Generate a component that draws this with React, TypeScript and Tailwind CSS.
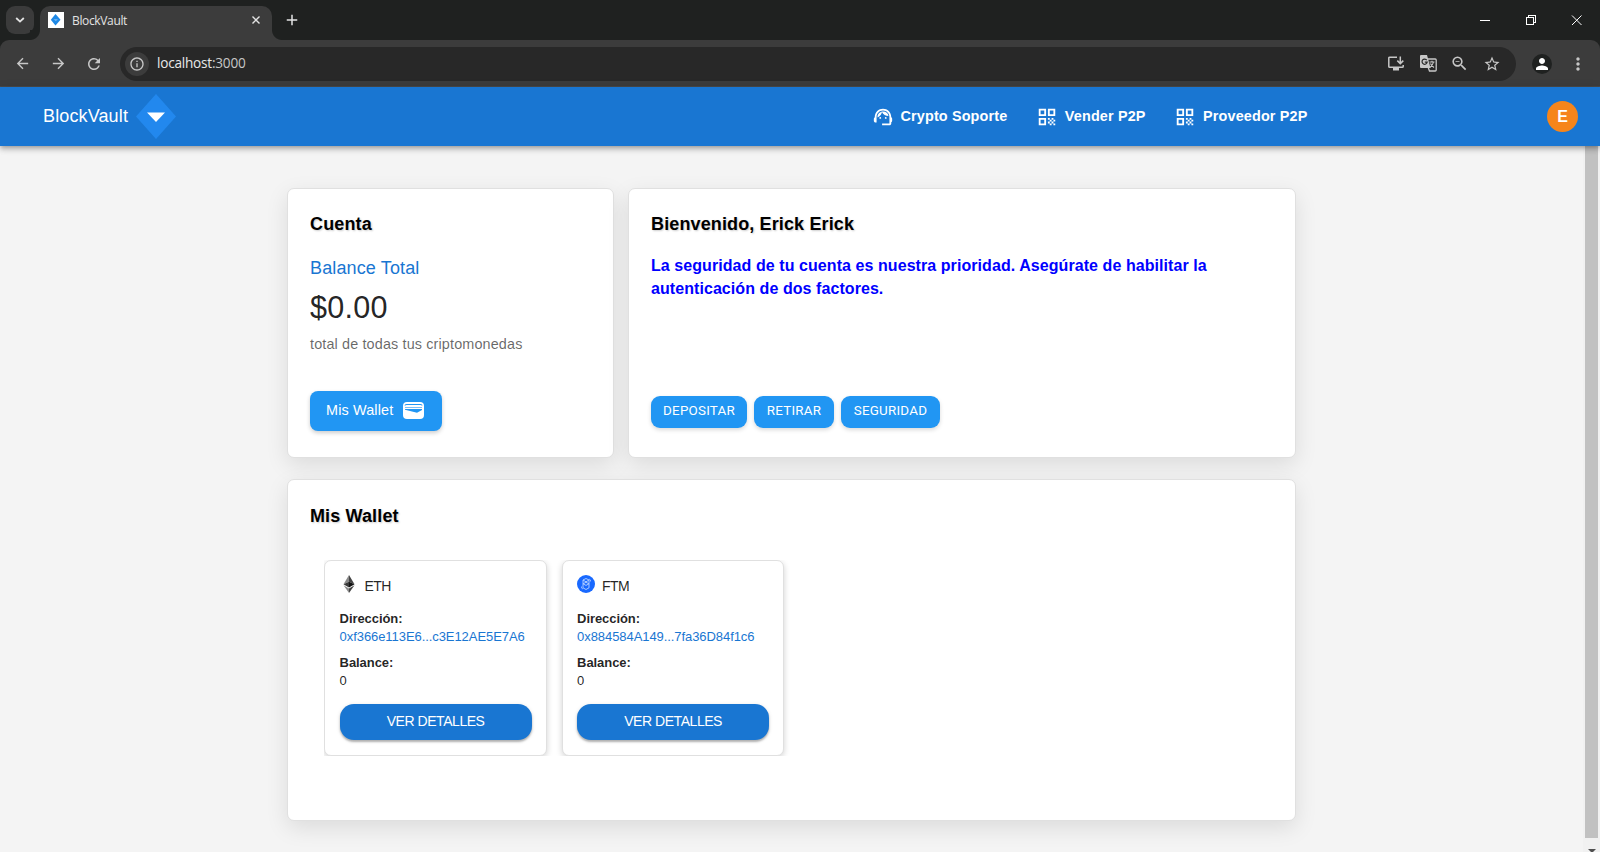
import type { ReactNode } from "react";
import {
  MdArrowBack,
  MdArrowForward,
  MdInfoOutline,
  MdMoreVert,
  MdPerson,
  MdQrCode,
  MdRefresh,
  MdStarBorder,
  MdSupportAgent,
  MdZoomOut,
  MdAdd,
} from "react-icons/md";

function TabStrip() {
  return (
    <div className="flex h-10 shrink-0 bg-[#1f2120] pl-[6px] text-[#e3e3e3]">
      <div className="mt-[6px] flex size-7 items-center justify-center rounded-[9px] bg-[#3b3b3b]">
        <svg className="h-[6px] w-[10px]" viewBox="0 0 10 6" fill="none" stroke="currentColor" strokeWidth="1.8">
          <path d="M1.2 1L5 4.6L8.8 1" />
        </svg>
      </div>
      <div className="relative ml-[6px] mt-[6px] flex h-[34px] w-[232px] items-center rounded-t-[10px] bg-[#3c3c3c] pl-2 pr-[12px]">
        <span className="absolute -left-[10px] bottom-0 size-[10px] bg-[radial-gradient(circle_at_0_0,#1f2120_9.5px,#3c3c3c_10.5px)]" />
        <span className="absolute -right-[10px] bottom-0 size-[10px] bg-[radial-gradient(circle_at_100%_0,#1f2120_9.5px,#3c3c3c_10.5px)]" />
        <svg className="-mt-[6px] size-4 bg-white" viewBox="0 0 16 16">
          <path d="M7.5 2L12.5 7.8L7.5 13.5L2.8 7.8Z" fill="#1e88e5" />
          <path d="M5.5 7.3H10L7.8 9Z" fill="#7fbcf3" />
        </svg>
        <span className="-mt-[5px] ml-2 font-['Open_Sans','Noto_Sans',sans-serif] text-[12px] tracking-[-0.35px]">BlockVault</span>
        <svg className="-mt-[6px] ml-auto size-2" viewBox="0 0 8 8" fill="none" stroke="currentColor" strokeWidth="1.4">
          <path d="M.5 .5L7.5 7.5M7.5 .5L.5 7.5" />
        </svg>
      </div>
      <MdAdd size={18} className="ml-[11px] mt-[11px]" />
      <div className="ml-auto flex items-center pr-[18px] text-white">
        <svg className="h-[12px] w-[102px]" viewBox="0 0 102 12" fill="none" stroke="currentColor" shapeRendering="crispEdges">
          <path d="M0 6.5H10" />
          <path d="M46.5 3.5H53.5V10.5H46.5ZM48.5 3.5V1.5H55.5V8.5H53.5" />
          <path d="M92 1.5L101.5 11M101.5 1.5L92 11" shapeRendering="auto" />
        </svg>
      </div>
    </div>
  );
}

function InstallIcon() {
  return (
    <svg className="h-[15px] w-4" viewBox="0 0 16 15" fill="none" stroke="currentColor" strokeWidth="1.5">
      <path d="M9 1.2H1.8Q.8 1.2 .8 2V10.4Q.8 11.2 1.8 11.2H14.2Q15.2 11.2 15.2 10.4V9" />
      <path d="M12.3 0.5V7M9.3 4.6L12.3 7.6L15.3 4.6" />
      <path d="M5 13H11" strokeWidth="3" />
    </svg>
  );
}

function TranslateIcon() {
  return (
    <svg className="h-[17px] w-[17px]" viewBox="0 0 17 17" fill="none">
      <path d="M7 4H15.2Q16.2 4 16.2 5V15Q16.2 16 15.2 16H9.5L8 12" stroke="#c7c7c7" strokeWidth="1.3" />
      <path d="M1 0H7L10.5 13H1Q0 13 0 12V1Q0 0 1 0Z" fill="#c7c7c7" />
      <path d="M6.8 5.2A2.6 2.6 0 1 0 7.2 7.2H4.8" stroke="#282828" strokeWidth="1.2" />
      <path d="M9.5 7H14.5M12 5.8V7M13.5 7Q12.8 10.5 9.8 12.5M10.5 8.5Q11.5 11 14 12.5" stroke="#c7c7c7" strokeWidth="1.1" />
    </svg>
  );
}

function Toolbar() {
  return (
    <div className="shrink-0 bg-[#1f2120]">
      <div className="flex h-[47px] items-center rounded-t-[9px] border-b border-[#4a4a4a] bg-[#3c3c3c] px-[14px] pt-px text-[#c7c7c7]">
        <MdArrowBack size={17} />
        <MdArrowForward size={17} className="ml-[19px]" />
        <MdRefresh size={18} className="ml-[18px]" />
        <div className="ml-[17px] flex h-[34px] w-[1396px] items-center rounded-full bg-[#282828] pl-[5px] pr-[15px]">
          <span className="flex size-6 items-center justify-center rounded-full bg-[#3c3c3c]">
            <MdInfoOutline size={16} />
          </span>
          <span className="ml-2 font-['Open_Sans','Noto_Sans',sans-serif] text-[13.6px] tracking-[-0.22px] text-[#e8e8e8]">
            localhost<span className="text-[#c7c7c7]">:3000</span>
          </span>
          <div className="ml-auto flex items-center">
            <InstallIcon />
            <span className="ml-4 mr-[13px]">
              <TranslateIcon />
            </span>
            <MdZoomOut size={19} />
            <MdStarBorder size={18} className="ml-[14px]" />
          </div>
        </div>
        <span className="ml-4 flex size-5 items-center justify-center rounded-full bg-[#1f2120] text-white">
          <MdPerson size={18} />
        </span>
        <MdMoreVert size={20} className="-mr-[2px] ml-auto" />
      </div>
    </div>
  );
}

function NavItem({ icon, label }: { icon: ReactNode; label: string }) {
  return (
    <a className="flex items-center gap-[7px]">
      {icon}
      <span className="text-[14.4px] font-bold tracking-[0.15px]">{label}</span>
    </a>
  );
}

function Header() {
  return (
    <header className="relative z-10 flex h-[59px] shrink-0 items-center bg-[#1976d2] pl-[43px] pr-[22px] text-white shadow-[0_2px_4px_-1px_rgba(0,0,0,0.2),0_4px_5px_rgba(0,0,0,0.14),0_1px_9px_rgba(0,0,0,0.12)]">
      <span className="text-[18px] tracking-[0.13px]">BlockVault</span>
      <svg className="ml-[7.5px] h-[45px] w-10" viewBox="0 0 40 45">
        <path d="M20 0L40 22.5L20 45L0 22.5Z" fill="#2288ee" />
        <path d="M11 18.5H29L20 28Z" fill="#fff" />
      </svg>
      <nav className="ml-[696px] flex items-center gap-[28.5px]">
        <NavItem icon={<MdSupportAgent size={22} />} label="Crypto Soporte" />
        <NavItem icon={<MdQrCode size={22} />} label="Vender P2P" />
        <NavItem icon={<MdQrCode size={22} />} label="Proveedor P2P" />
      </nav>
      <span className="ml-auto flex size-[31px] items-center justify-center rounded-full bg-[#f6851b] pt-px text-[16px] font-bold">E</span>
    </header>
  );
}

function Card({ className, title, children }: { className: string; title: string; children: ReactNode }) {
  return (
    <section className={`rounded-[7px] border border-[#e0e0e0] bg-white px-[22px] shadow-[0_7px_22px_rgba(0,0,0,0.1)] ${className}`}>
      <h2 className="text-[18px] font-bold leading-7 tracking-[0.13px] text-black [text-shadow:1px_1px_2px_rgba(0,0,0,0.2)]">{title}</h2>
      {children}
    </section>
  );
}

function ActionButton({ className, label }: { className: string; label: string }) {
  return (
    <button className={`h-8 rounded-[9px] bg-[#2196f3] pb-[2px] font-[Roboto,sans-serif] text-[13.4px] font-[450] tracking-[0.22px] text-white shadow-[0_2px_4px_rgba(0,0,0,0.15)] ${className}`}>
      {label}
    </button>
  );
}

function EthIcon() {
  return (
    <svg className="size-[18px]" viewBox="0 0 18 18">
      <path d="M9 0L3.5 9.2L9 6.7Z" fill="#8a8a8a" />
      <path d="M9 0L14.5 9.2L9 6.7Z" fill="#444" />
      <path d="M9 6.7L3.5 9.2L9 12.4Z" fill="#393939" />
      <path d="M9 6.7L14.5 9.2L9 12.4Z" fill="#141414" />
      <path d="M9 13.5L3.5 10.3L9 18Z" fill="#8a8a8a" />
      <path d="M9 13.5L14.5 10.3L9 18Z" fill="#444" />
    </svg>
  );
}

function FtmIcon() {
  return (
    <svg className="size-[18px]" viewBox="0 0 18 18" fill="none">
      <circle cx="9" cy="9" r="9" fill="#1969ff" />
      <path d="M6 5V12.8L9 14.5L12 12.8V5M6 5L9 3.5L12 5L9 6.8ZM6 8.8L9 7.3L12 8.8L9 10.4Z" stroke="#b9d2ff" strokeWidth="0.9" />
      <path d="M4.5 11.5V13L6 14M13.5 6.5V5L12 4" stroke="#a9c7ff" strokeWidth="0.8" />
    </svg>
  );
}

function WalletCard({ icon, symbol, address }: { icon: ReactNode; symbol: string; address: string }) {
  return (
    <article className="h-[196px] w-[222.5px] shrink-0 rounded-[7px] border border-[#e0e0e0] bg-white pl-[14.6px] pt-[14px] text-[13px] leading-[18px] tracking-[-0.07px] text-black/87 shadow-[0_2px_6px_rgba(0,0,0,0.18)]">
      <div className="flex h-[18px] gap-[7px]">
        {icon}
        <span className="pt-[2px] text-[14px] tracking-[-0.6px]">{symbol}</span>
      </div>
      <p className="mt-[17px] font-bold">Dirección:</p>
      <p className="text-[#1976d2]">{address}</p>
      <p className="mt-2 font-bold">Balance:</p>
      <p>0</p>
      <button className="mt-[14px] h-9 w-[192px] rounded-[14px] bg-[#1976d2] pb-[2px] text-[14px] tracking-[-0.45px] text-white shadow-[0_2px_2px_rgba(0,0,0,0.25),0_1px_4px_rgba(0,0,0,0.12)]">
        VER DETALLES
      </button>
    </article>
  );
}

function Scrollbar() {
  return (
    <div className="flex h-full w-[17px] flex-col items-center overflow-hidden bg-[#f1f1f1]">
      <div className="h-[692px] w-[13px] shrink-0 bg-[#c1c1c1]" />
      <svg className="mt-[11px] h-[4px] w-[8px] shrink-0" viewBox="0 0 8 4">
        <path d="M0 0H8L4 4Z" fill="#505050" />
      </svg>
    </div>
  );
}

export default function App() {
  return (
    <div className="flex h-[852px] w-[1600px] flex-col overflow-hidden bg-[#f4f4f4] font-['Liberation_Sans',Arial,sans-serif]">
      <TabStrip />
      <Toolbar />
      <Header />
      <div className="flex min-h-0 flex-1">
        <main className="flex flex-1 flex-col gap-[21px] pl-[287px] pt-[42px]">
          <div className="flex gap-[14.5px]">
            <Card className="h-[270px] w-[326.5px] pt-[21px]" title="Cuenta">
              <p className="mt-4 text-[18px] leading-7 tracking-[0.13px] text-[#1976d2]">Balance Total</p>
              <p className="mt-[6px] text-[30.6px] leading-[38px] tracking-[0.22px] text-black/87">$0.00</p>
              <p className="mt-[7px] text-[14.4px] leading-[22px] tracking-[0.14px] text-black/60">total de todas tus criptomonedas</p>
              <button className="mt-9 flex h-10 w-[132px] items-center rounded-lg bg-[#2196f3] pb-px pl-4 text-[14.4px] tracking-[0.15px] text-white shadow-[0_2px_4px_rgba(0,0,0,0.2)]">
                Mis Wallet
                <svg className="ml-auto mr-[18px] h-[17px] w-[21px]" viewBox="0 0 21 17" fill="none">
                  <rect width="21" height="17" rx="4" fill="#fff" />
                  <path d="M2 3.6Q2 2.5 3.5 2.5H17.5Q19 2.5 19 3.6" stroke="#2196f3" strokeWidth="1.1" />
                  <path d="M2 5H19V6H2Z" fill="#7cc0f8" />
                  <path d="M2 7H19V8L14 10.7L2 7.8Z" fill="#2196f3" />
                </svg>
              </button>
            </Card>
            <Card className="h-[270px] w-[668px] pt-[21px]" title="Bienvenido, Erick Erick">
              <p className="mt-4 w-[580px] text-[16px] font-bold leading-[23px] tracking-[0.07px] text-[#0000ff]">
                La seguridad de tu cuenta es nuestra prioridad. Asegúrate de habilitar la autenticación de dos factores.
              </p>
              <div className="mt-[96px] flex gap-[7px]">
                <ActionButton className="w-24" label="DEPOSITAR" />
                <ActionButton className="w-20" label="RETIRAR" />
                <ActionButton className="w-[99px]" label="SEGURIDAD" />
              </div>
            </Card>
          </div>
          <Card className="h-[342px] w-[1009px] pt-[22px]" title="Mis Wallet">
            <div className="ml-[14px] mt-[30px] flex h-[196px] gap-[15px] overflow-hidden">
              <WalletCard icon={<EthIcon />} symbol="ETH" address="0xf366e113E6...c3E12AE5E7A6" />
              <WalletCard icon={<FtmIcon />} symbol="FTM" address="0x884584A149...7fa36D84f1c6" />
            </div>
          </Card>
        </main>
        <Scrollbar />
      </div>
    </div>
  );
}
